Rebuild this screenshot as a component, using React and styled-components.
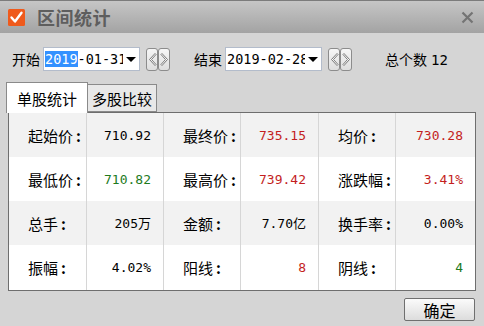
import React from 'react';
import styled, { createGlobalStyle } from 'styled-components';

const GlobalStyle = createGlobalStyle`
  html, body {
    margin: 0;
    padding: 0;
    background: #d5d5d5;
  }
  * {
    box-sizing: border-box;
  }
`

const CJK = `"Noto Sans CJK SC", "Noto Sans", sans-serif`
const MONO = `"DejaVu Sans Mono", "Noto Sans CJK SC", monospace`

const Window = styled.div`
  width: 484px;
  height: 326px;
  display: flex;
  flex-direction: column;
  background: #d5d5d5;
  font-family: ${CJK};
  color: #000;
  overflow: hidden;
`

const TitleBar = styled.div`
  height: 33px;
  flex-shrink: 0;
  display: flex;
  align-items: center;
  padding: 0 10px 0 8px;
  border-top: 1px solid #7c7c7c;
  background: linear-gradient(#c6c6c6, #a3a3a3);
`

const Title = styled.span`
  margin-left: 12px;
  font-size: 18px;
  font-weight: bold;
  color: #5e5e5e;
  letter-spacing: 0.5px;
  line-height: 1;
`

const CloseButton = styled.div`
  margin-left: auto;
  display: flex;
  align-items: center;
`

const Toolbar = styled.div`
  display: flex;
  align-items: center;
  height: 24px;
  margin-top: 14px;
  padding-left: 12px;
`

const FieldLabel = styled.span`
  font-size: 14px;
  line-height: 1;
  margin-left: ${p => p.$gap || 0}px;
  margin-right: 3px;
`

const DateBox = styled.div`
  width: 97px;
  height: 24px;
  background: #fff;
  border: 1px solid #b3bccb;
  display: flex;
  align-items: center;
  padding-left: 1px;
`

const DateText = styled.div`
  width: 78px;
  flex-shrink: 0;
  overflow: hidden;
  white-space: nowrap;
  font-family: ${MONO};
  font-size: 13.5px;
  line-height: 17px;
`

const Selected = styled.span`
  background: #3391ff;
  color: #fff;
`

const Caret = styled.div`
  margin-left: 3px;
  width: 0;
  height: 0;
  border-left: 5px solid transparent;
  border-right: 5px solid transparent;
  border-top: 5px solid #000;
`

const StepGroup = styled.div`
  display: flex;
  margin-left: 6px;
`

const StepButton = styled.div`
  width: 12px;
  height: 23px;
  border: 1px solid #8c8c8c;
  border-radius: 3px;
  background: linear-gradient(#f6f6f6, #dedede);
  display: flex;
  align-items: center;
  justify-content: center;
`

const Count = styled.span`
  margin-left: 33px;
  font-size: 14px;
  line-height: 1;
  & > b {
    font-weight: normal;
    font-family: ${MONO};
    margin-left: 4px;
  }
`

const Tabs = styled.div`
  display: flex;
  align-items: flex-end;
  margin-top: 10px;
  padding-left: 6px;
  height: 31px;
  position: relative;
  z-index: 1;
`

const Tab = styled.div`
  height: ${p => (p.$active ? 31 : 28)}px;
  padding: 0 ${p => (p.$active ? 10 : 4)}px;
  margin-bottom: ${p => (p.$active ? -1 : 0)}px;
  background: ${p => (p.$active ? '#fff' : '#e8e8e8')};
  border: 1px solid #8a8a8a;
  border-bottom: ${p => (p.$active ? 'none' : '1px solid #8a8a8a')};
  border-left: ${p => (p.$active ? '1px solid #8a8a8a' : 'none')};
  display: flex;
  align-items: center;
  font-size: 15px;
  line-height: 1;
`

const Table = styled.div`
  margin: 0 8px;
  width: 468px;
  height: 179px;
  border: 1px solid #6e6e6e;
  display: grid;
  grid-template-columns: 78px 77px 77px 78px 77px 1fr;
  grid-template-rows: 44px 44px 44px 45px;
`

const Cell = styled.div`
  background: ${p => (p.$odd ? '#f2f2f2' : '#fff')};
  border-right: ${p => (p.$last ? 'none' : '1px solid #d6d6d6')};
  display: flex;
  align-items: center;
  justify-content: ${p => (p.$value ? 'flex-end' : 'flex-start')};
  padding: ${p => (p.$value ? '0 12px 0 0' : '0 0 0 19px')};
  white-space: nowrap;
`

const Label = styled.span`
  font-size: 15px;
  line-height: 1;
  &::after {
    content: ':';
    margin-left: 3px;
    font-weight: bold;
  }
`

const Value = styled.span`
  font-family: ${MONO};
  font-size: 13px;
  line-height: 1;
  color: ${p => p.$color};
`

const Footer = styled.div`
  display: flex;
  justify-content: flex-end;
  padding: 7px 9px 0 0;
`

const OkButton = styled.div`
  width: 71px;
  height: 23px;
  border: 1px solid #6f6f6f;
  border-radius: 2px;
  background: linear-gradient(#fbfbfb, #dcdcdc);
  display: flex;
  align-items: center;
  justify-content: center;
  font-size: 16px;
  line-height: 1;
`

const RED = '#c41e1e'
const GREEN = '#1d7a1d'
const BLACK = '#000'

const rows = [
  [['起始价', '710.92', BLACK], ['最终价', '735.15', RED], ['均价', '730.28', RED]],
  [['最低价', '710.82', GREEN], ['最高价', '739.42', RED], ['涨跌幅', '3.41%', RED]],
  [['总手', '205万', BLACK], ['金额', '7.70亿', BLACK], ['换手率', '0.00%', BLACK]],
  [['振幅', '4.02%', BLACK], ['阳线', '8', RED], ['阴线', '4', GREEN]],
]

const CheckIcon = () => (
  <svg width="17" height="17" viewBox="0 0 17 17">
    <rect x="0" y="0" width="17" height="17" rx="1.5" fill="#ef5a1c" />
    <path d="M3.5 8.5 L7 12.5 L13.5 3.8" fill="none" stroke="#fff" strokeWidth="2.4" strokeLinecap="round" strokeLinejoin="round" />
  </svg>
)

const CloseIcon = () => (
  <svg width="13" height="13" viewBox="0 0 13 13">
    <path d="M1.5 1.5 L11.5 11.5 M11.5 1.5 L1.5 11.5" stroke="#747474" strokeWidth="2.2" />
  </svg>
)

const Chevron = ({ dir }) => (
  <svg width="9" height="15" viewBox="0 0 9 15">
    <polygon
      points={dir === 'left' ? '7,1.5 1.5,7.5 7,13.5 8,12.5 3.5,7.5 8,2.5' : '2,1.5 7.5,7.5 2,13.5 1,12.5 5.5,7.5 1,2.5'}
      fill="#fff"
      stroke="#6a6a6a"
      strokeWidth="0.9"
      strokeLinejoin="round"
    />
  </svg>
)

const Stepper = () => (
  <StepGroup>
    <StepButton><Chevron dir="left" /></StepButton>
    <StepButton><Chevron dir="right" /></StepButton>
  </StepGroup>
)

const DateField = ({ year, rest, highlight }) => (
  <DateBox>
    <DateText>
      {highlight ? <Selected>{year}</Selected> : <span>{year}</span>}
      {rest}
    </DateText>
    <Caret />
  </DateBox>
)

const App = () => {
  return (
    <Window>
      <GlobalStyle />
      <TitleBar>
        <CheckIcon />
        <Title>区间统计</Title>
        <CloseButton><CloseIcon /></CloseButton>
      </TitleBar>

      <Toolbar>
        <FieldLabel>开始</FieldLabel>
        <DateField year="2019" rest="-01-31" highlight />
        <Stepper />
        <FieldLabel $gap={24}>结束</FieldLabel>
        <DateField year="2019" rest="-02-28" />
        <Stepper />
        <Count>总个数<b>12</b></Count>
      </Toolbar>

      <Tabs>
        <Tab $active>单股统计</Tab>
        <Tab>多股比较</Tab>
      </Tabs>

      <Table>
        {rows.map((row, r) =>
          row.flatMap(([label, value, color], c) => [
            <Cell key={`${r}-${c}-l`} $odd={r % 2 === 0}>
              <Label>{label}</Label>
            </Cell>,
            <Cell key={`${r}-${c}-v`} $odd={r % 2 === 0} $value $last={c === 2}>
              <Value $color={color}>{value}</Value>
            </Cell>,
          ])
        )}
      </Table>

      <Footer>
        <OkButton>确定</OkButton>
      </Footer>
    </Window>
  );
};

export default App;
